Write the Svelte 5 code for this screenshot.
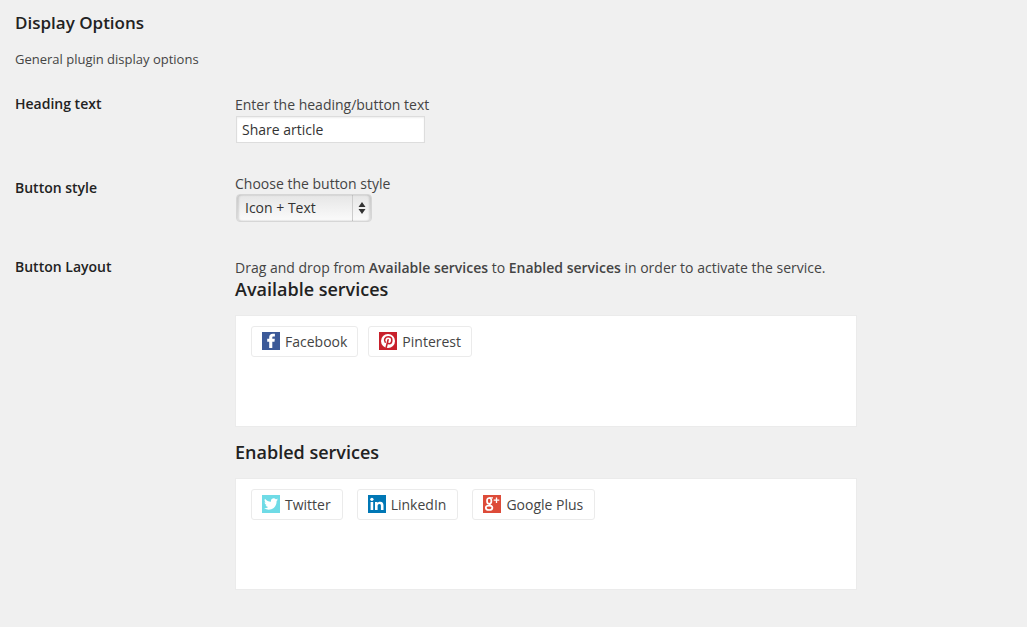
<script>
  let heading = $state('Share article');
  let style = $state('Icon + Text');

  const services = {
    facebook: { label: 'Facebook', color: '#3b5998' },
    pinterest: { label: 'Pinterest', color: '#c8202b' },
    twitter: { label: 'Twitter', color: '#6fdbe6' },
    linkedin: { label: 'LinkedIn', color: '#0077b5' },
    google: { label: 'Google Plus', color: '#dd4b39' }
  };

  const zones = [
    { title: 'Available services', items: ['facebook', 'pinterest'], kind: 'available' },
    { title: 'Enabled services', items: ['twitter', 'linkedin', 'google'], kind: 'enabled' }
  ];
</script>

{#snippet icon(name)}
  <svg class="icon" viewBox="0 0 18 18" aria-hidden="true">
    <rect width="18" height="18" fill={services[name].color} />
    {#if name === 'facebook'}
      <path fill="#fff" d="M7.2 16V9.7H5.2V6.8H7.2V5.3C7.2 2.9 8.5 1.7 10.8 1.7H12.9V4.6H11.4C10.6 4.6 10.3 4.9 10.3 5.6V6.8H12.8L12.5 9.7H10.3V16Z" />
    {:else if name === 'pinterest'}
      <circle cx="9" cy="9" r="7" fill="#fff" />
      <path fill="none" stroke="#c8202b" stroke-width="1.6" stroke-linecap="round" d="M6.2 10.1C4.6 7.7 6.1 4.8 9.2 4.8C11.4 4.8 12.8 6.1 12.8 8C12.8 10.1 11.6 11.7 10.1 11.7C9.2 11.7 8.6 11.2 8.4 10.6M9.1 7.8L7.2 15.4" />
    {:else if name === 'twitter'}
      <path fill="#fff" d="M16 4.6C15.5 4.8 15 5 14.4 5.1C15 4.7 15.4 4.2 15.6 3.5C15.1 3.8 14.5 4.1 13.8 4.2C12 2.3 8.4 3.6 9 6.8C6.6 6.7 4.5 5.6 3 3.8C2.2 5.2 2.6 6.8 3.9 7.7C3.4 7.7 3 7.5 2.6 7.3C2.6 8.7 3.6 9.8 4.9 10.1C4.5 10.2 4 10.2 3.6 10.1C4 11.3 5 12 6.3 12.1C5.1 13 3.6 13.4 2 13.3C7.8 16.9 14.6 13.2 14.6 6.5V6.1C15.2 5.7 15.6 5.2 16 4.6Z" />
    {:else if name === 'linkedin'}
      <circle cx="3.9" cy="4.3" r="1.6" fill="#fff" />
      <path fill="#fff" d="M2.6 6.9H5.2V15H2.6ZM7 6.9H9.5V8C10.1 7.1 10.9 6.7 12.2 6.7C14.6 6.7 15.5 8.2 15.5 10.5V15H12.9V10.9C12.9 9.7 12.6 9 11.5 9C10.2 9 9.6 9.8 9.6 11V15H7Z" />
    {:else}
      <g fill="none" stroke="#fff">
        <ellipse cx="6.2" cy="5.9" rx="2.2" ry="2.9" stroke-width="1.7" />
        <path stroke-width="1.3" d="M6.2 2.8H10M7.2 8.6C5.6 9.3 7.2 10 8.6 11" />
        <ellipse cx="6.1" cy="12.8" rx="3.3" ry="2.2" stroke-width="1.7" />
        <path stroke-width="1.3" d="M13.5 2.4V8M10.7 5.2H16.3" />
      </g>
    {/if}
  </svg>
{/snippet}

<main>
  <h1>Display Options</h1>
  <p class="intro">General plugin display options</p>

  <form>
    <div class="row text-row">
      <div class="name">Heading text</div>
      <div class="field">
        <label for="heading">Enter the heading/button text</label>
        <input id="heading" type="text" bind:value={heading} />
      </div>
    </div>

    <div class="row style-row">
      <div class="name">Button style</div>
      <div class="field">
        <label for="style">Choose the button style</label>
        <div class="select">
          <select id="style" bind:value={style}>
            <option>Icon + Text</option>
          </select>
          <svg class="arrows" viewBox="0 0 8 14" aria-hidden="true">
            <path fill="#333" d="M4 1L7.5 6H0.5ZM4 13L0.5 8H7.5Z" />
          </svg>
        </div>
      </div>
    </div>

    <div class="row">
      <div class="name">Button Layout</div>
      <div class="field">
        <p class="help">Drag and drop from <strong>Available services</strong> to <strong>Enabled services</strong> in order to activate the service.</p>
        {#each zones as zone}
          <h2>{zone.title}</h2>
          <ul class={zone.kind}>
            {#each zone.items as name}
              <li draggable="true">{@render icon(name)}{services[name].label}</li>
            {/each}
          </ul>
        {/each}
      </div>
    </div>
  </form>
</main>

<style>
  :global(body) {
    margin: 0;
    background: #f0f0f0;
  }

  main {
    padding: 12px 15px;
    font: 14px/20px 'Open Sans', sans-serif;
    color: #444;
  }

  h1, h2 {
    margin: 0;
    font-size: 18px;
    line-height: 22px;
    font-weight: 600;
    color: #222;
  }

  h1 {
    font-size: 17px;
  }

  .intro {
    margin: 15px 0 25px;
    font-size: 13px;
  }

  .row {
    display: grid;
    grid-template-columns: 220px minmax(0, 1fr);
    margin-bottom: 30px;
  }

  .name {
    font-weight: 600;
    color: #222;
  }

  .style-row {
    margin-bottom: 35px;
  }

  .style-row .name {
    padding-top: 4px;
  }

  .field {
    display: flex;
    flex-direction: column;
    align-items: flex-start;
    padding-top: 1px;
  }

  .style-row .field {
    padding-top: 0;
  }

  input {
    box-sizing: border-box;
    width: 189px;
    height: 27px;
    margin: 1px;
    padding: 3px 5px;
    border: 1px solid #ddd;
    background: #fff;
    box-shadow: inset 0 1px 2px rgba(0, 0, 0, 0.07);
    font: inherit;
    color: #333;
  }

  .select {
    display: grid;
    grid-template-columns: 116px 20px;
    align-items: center;
    margin: 0 1px;
  }

  select {
    grid-area: 1 / 1 / 2 / 3;
    box-sizing: border-box;
    width: 100%;
    height: 28px;
    margin: 0;
    padding: 0 24px 0 8px;
    appearance: none;
    border: 1px solid #d6d6d6;
    border-radius: 4px;
    background: linear-gradient(#ccc, #ccc) 115px 0 / 1px 100% no-repeat, linear-gradient(#e6e6e6, #fbfbfb);
    box-shadow: inset 2px 0 2px rgba(0, 0, 0, 0.13), inset -2px 0 2px rgba(0, 0, 0, 0.13);
    font: inherit;
    color: #333;
  }

  .arrows {
    grid-area: 1 / 2;
    justify-self: center;
    width: 8px;
    height: 14px;
    pointer-events: none;
  }

  .help {
    margin: 0;
  }

  strong {
    font-weight: 600;
  }

  ul {
    box-sizing: border-box;
    display: flex;
    align-items: flex-start;
    width: 100%;
    max-width: 622px;
    min-height: 112px;
    margin: 15px 0 14px;
    padding: 10px 15px;
    border: 1px solid #ebebeb;
    background: #fff;
    list-style: none;
  }

  .available {
    gap: 10px;
  }

  .enabled {
    gap: 14px;
  }

  li {
    display: flex;
    gap: 5px;
    padding: 5px 10px 4px;
    border: 1px solid #ebebeb;
    border-radius: 3px;
    cursor: move;
  }

  .enabled li {
    padding-right: 11px;
  }

  .icon {
    width: 18px;
    height: 18px;
  }
</style>
